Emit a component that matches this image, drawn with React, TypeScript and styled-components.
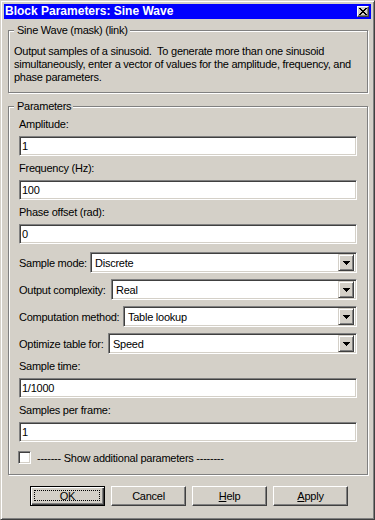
import styled, { createGlobalStyle } from 'styled-components';

const face = '#d4d0c8';
const shadow = '#808080';
const dark = '#404040';

const GlobalStyle = createGlobalStyle`
  html, body {
    margin: 0;
    padding: 0;
    background: ${face};
  }
  body {
    font-family: "Liberation Sans", Arial, sans-serif;
    font-size: 11px;
    letter-spacing: -0.25px;
    color: #000;
  }
`;

// Window frame
const Window = styled.div`
  box-sizing: border-box;
  width: 375px;
  height: 520px;
  background: ${face};
  border: 1px solid;
  border-color: ${face} ${dark} ${dark} ${face};
  box-shadow: inset 1px 1px #fff, inset -1px -1px ${shadow};
  padding: 3px;
  display: flex;
  flex-direction: column;
`;

const TitleBar = styled.div`
  height: 15px;
  background: #0000ff;
  display: flex;
  align-items: center;
  justify-content: space-between;
  padding: 0 2px 0 1px;
`;

const TitleText = styled.span`
  color: #fff;
  font-weight: bold;
  font-size: 12px;
  letter-spacing: 0;
  line-height: 15px;
  white-space: nowrap;
`;

const CloseButton = styled.div`
  box-sizing: border-box;
  width: 12px;
  height: 11px;
  background: ${face};
  border: 1px solid;
  border-color: #fff ${dark} ${dark} #fff;
  box-shadow: inset -1px -1px ${shadow};
  display: flex;
  align-items: center;
  justify-content: center;
`;

const Body = styled.div`
  flex: 1;
  display: flex;
  flex-direction: column;
  padding: 0 3px 0 4px;
`;

// Etched group box
const GroupBox = styled.div<{ $top: number; $pad: string }>`
  position: relative;
  margin-top: ${(p) => p.$top}px;
  border: 1px solid ${shadow};
  box-shadow: inset 1px 1px #fff, 1px 1px #fff;
  padding: ${(p) => p.$pad};
`;

const Caption = styled.span`
  position: absolute;
  top: -7px;
  left: 5px;
  padding: 0 2px 0 3px;
  background: ${face};
  line-height: 13px;
  white-space: nowrap;
`;

const Description = styled.div`
  line-height: 13px;
  white-space: nowrap;
`;

const FieldLabel = styled.div`
  height: 24px;
  display: flex;
  align-items: center;
  white-space: nowrap;
`;

const TextInput = styled.div`
  box-sizing: border-box;
  height: 20px;
  background: #fff;
  border: 1px solid;
  border-color: ${shadow} #fff #fff ${shadow};
  box-shadow: inset 1px 1px ${dark}, inset -1px -1px ${face};
  padding: 0 2px;
  display: flex;
  align-items: center;
  white-space: nowrap;
`;

const SelectRow = styled.div<{ $gap: number }>`
  display: flex;
  align-items: center;
  margin-top: ${(p) => p.$gap}px;
`;

const SelectLabel = styled.span<{ $width: number }>`
  width: ${(p) => p.$width}px;
  flex: none;
  white-space: nowrap;
`;

const SelectBox = styled.div`
  box-sizing: border-box;
  flex: 1;
  height: 21px;
  background: #fff;
  border: 1px solid;
  border-color: ${shadow} #fff #fff ${shadow};
  box-shadow: inset 1px 1px ${dark}, inset -1px -1px ${face};
  padding: 2px 2px 2px 4px;
  display: flex;
  align-items: center;
  justify-content: space-between;
`;

const ArrowButton = styled.div`
  box-sizing: border-box;
  width: 16px;
  height: 17px;
  background: ${face};
  border: 1px solid;
  border-color: ${face} ${dark} ${dark} ${face};
  box-shadow: inset 1px 1px #fff, inset -1px -1px ${shadow};
  display: flex;
  align-items: center;
  justify-content: center;
`;

const CheckRow = styled.div`
  display: flex;
  align-items: center;
  gap: 6px;
  margin-top: 9px;
  margin-left: -1px;
  white-space: nowrap;
`;

const CheckBox = styled.div`
  box-sizing: border-box;
  width: 13px;
  height: 13px;
  background: #fff;
  border: 1px solid;
  border-color: ${shadow} #fff #fff ${shadow};
  box-shadow: inset 1px 1px ${dark}, inset -1px -1px ${face};
`;

const ButtonRow = styled.div`
  display: flex;
  justify-content: center;
  gap: 6px;
  margin-top: 11px;
  padding-left: 2px;
`;

const PushButton = styled.div<{ $default?: boolean }>`
  box-sizing: border-box;
  position: relative;
  width: 75px;
  height: 20px;
  background: ${face};
  border: 1px solid;
  border-color: ${(p) => (p.$default ? '#000' : `#fff ${dark} ${dark} #fff`)};
  box-shadow: ${(p) =>
    p.$default
      ? `inset 1px 1px #fff, inset -1px -1px ${dark}, inset -2px -2px ${shadow}`
      : `inset -1px -1px ${shadow}`};
  display: flex;
  align-items: center;
  justify-content: center;
`;

const FocusRing = styled.span`
  position: absolute;
  inset: 3px 4px 4px 3px;
  border: 1px dotted #000;
`;

const Key = styled.span`
  text-decoration: underline;
`;

const Arrow = () => (
  <svg width="7" height="4" viewBox="0 0 7 4" shapeRendering="crispEdges">
    <path d="M0 0h7v1H0zM1 1h5v1H1zM2 2h3v1H2zM3 3h1v1H3z" fill="#000" />
  </svg>
);

const CloseGlyph = () => (
  <svg width="8" height="7" viewBox="0 0 8 7" shapeRendering="crispEdges">
    <path
      d="M0 0h2v1H0zM6 0h2v1H6zM1 1h2v1H1zM5 1h2v1H5zM2 2h4v1H2zM3 3h2v1H3zM2 4h4v1H2zM1 5h2v1H1zM5 5h2v1H5zM0 6h2v1H0zM6 6h2v1H6z"
      fill="#000"
    />
  </svg>
);

const textFields = [
  { label: 'Amplitude:', value: '1' },
  { label: 'Frequency (Hz):', value: '100' },
  { label: 'Phase offset (rad):', value: '0' },
];

const selects = [
  { label: 'Sample mode:', value: 'Discrete', width: 71 },
  { label: 'Output complexity:', value: 'Real', width: 92 },
  { label: 'Computation method:', value: 'Table lookup', width: 104 },
  { label: 'Optimize table for:', value: 'Speed', width: 89 },
];

const lowerFields = [
  { label: 'Sample time:', value: '1/1000' },
  { label: 'Samples per frame:', value: '1' },
];

const App = () => {
  return (
    <>
      <GlobalStyle />
      <Window>
        <TitleBar>
          <TitleText>Block Parameters: Sine Wave</TitleText>
          <CloseButton>
            <CloseGlyph />
          </CloseButton>
        </TitleBar>

        <Body>
          <GroupBox $top={11} $pad="14px 5px 8px">
            <Caption>Sine Wave (mask) (link)</Caption>
            <Description>
              Output samples of a sinusoid.{'\u00a0 '}To generate more than one sinusoid
              <br />
              simultaneously, enter a vector of values for the amplitude, frequency, and
              <br />
              phase parameters.
            </Description>
          </GroupBox>

          <GroupBox $top={13} $pad="5px 10px 10px">
            <Caption>Parameters</Caption>
            {textFields.map((f) => (
              <div key={f.label}>
                <FieldLabel>{f.label}</FieldLabel>
                <TextInput>{f.value}</TextInput>
              </div>
            ))}
            {selects.map((s, i) => (
              <SelectRow key={s.label} $gap={i === 0 ? 8 : 6}>
                <SelectLabel $width={s.width}>{s.label}</SelectLabel>
                <SelectBox>
                  <span>{s.value}</span>
                  <ArrowButton>
                    <Arrow />
                  </ArrowButton>
                </SelectBox>
              </SelectRow>
            ))}
            {lowerFields.map((f) => (
              <div key={f.label}>
                <FieldLabel>{f.label}</FieldLabel>
                <TextInput>{f.value}</TextInput>
              </div>
            ))}
            <CheckRow>
              <CheckBox />
              <span>------- Show additional parameters --------</span>
            </CheckRow>
          </GroupBox>

          <ButtonRow>
            <PushButton $default>
              OK
              <FocusRing />
            </PushButton>
            <PushButton>Cancel</PushButton>
            <PushButton>
              <span>
                <Key>H</Key>elp
              </span>
            </PushButton>
            <PushButton>
              <span>
                <Key>A</Key>pply
              </span>
            </PushButton>
          </ButtonRow>
        </Body>
      </Window>
    </>
  );
};

export default App;
